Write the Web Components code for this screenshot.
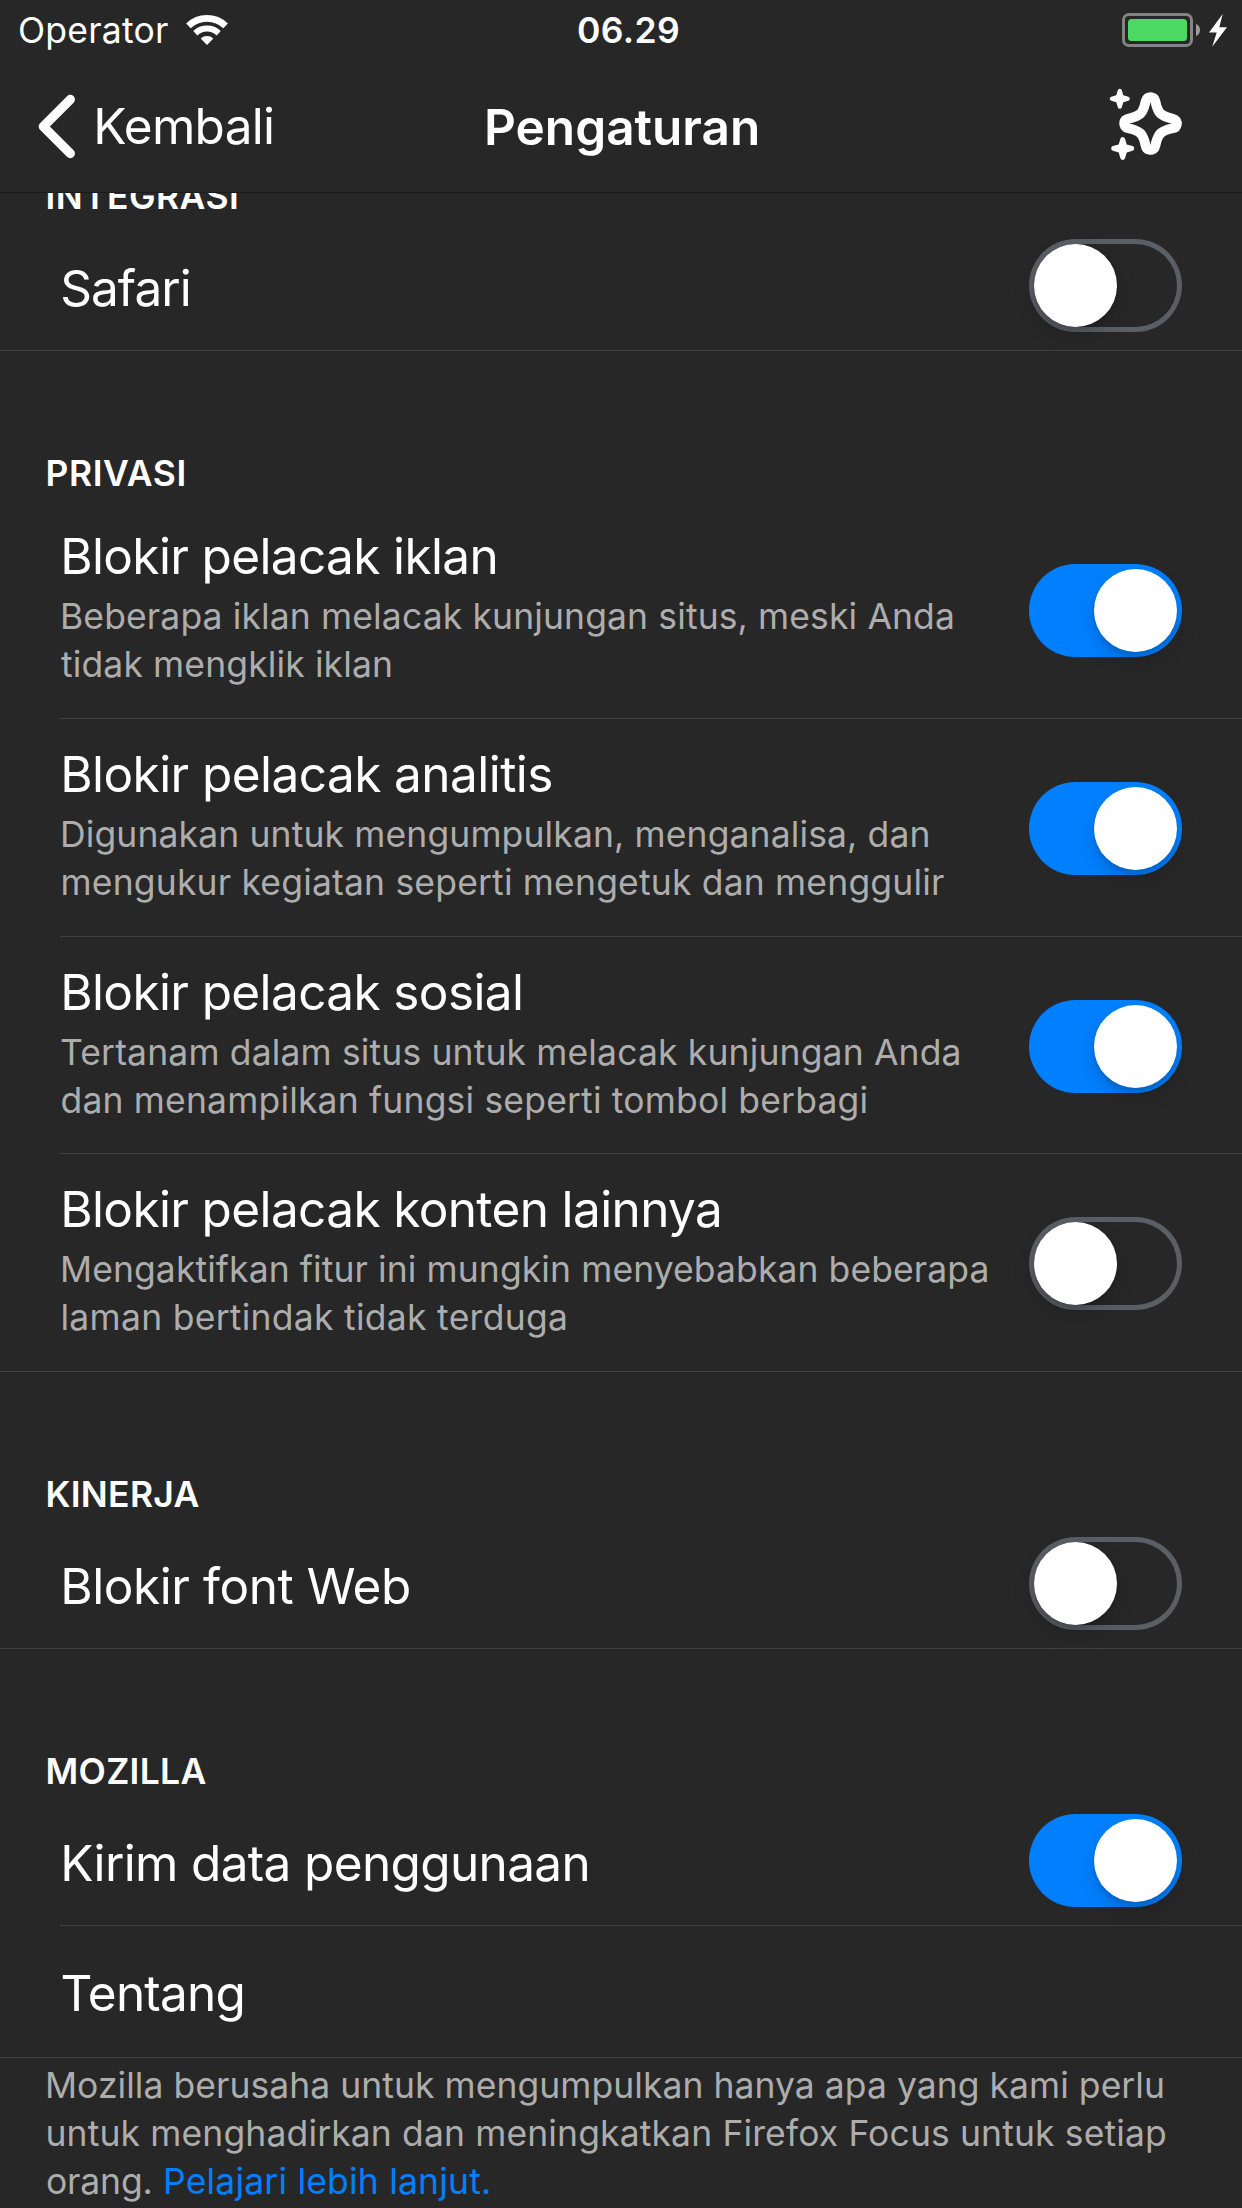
<!DOCTYPE html>
<html lang="id">
<head>
<meta charset="utf-8">
<title>Pengaturan</title>
<style>
  html, body { margin: 0; padding: 0; background: #272727; }
  body { width: 1242px; height: 2208px; overflow: hidden; color: #fff; font-family: Inter, "Liberation Sans", sans-serif; }
</style>
</head>
<body>
<settings-screen>
  <status-bar slot="status"></status-bar>
  <nav-bar slot="nav"></nav-bar>

  <settings-group first>
    <text-line slot="heading" kind="heading" x="47.5" w="189.5">INTEGRASI</text-line>
    <settings-row last>
      <text-line kind="title" x="2.2" w="127.5">Safari</text-line>
      <toggle-switch slot="control"></toggle-switch>
    </settings-row>
  </settings-group>

  <settings-group>
    <text-line slot="heading" kind="heading" x="47.5" w="137">PRIVASI</text-line>
    <settings-row tall>
      <text-line kind="title" x="4.2" w="431.3">Blokir pelacak iklan</text-line>
      <text-line slot="detail" kind="detail" x="3" w="890">Beberapa iklan melacak kunjungan situs, meski Anda</text-line>
      <text-line slot="detail" kind="detail" x="1" w="330">tidak mengklik iklan</text-line>
      <toggle-switch slot="control" on></toggle-switch>
    </settings-row>
    <settings-row tall>
      <text-line kind="title" x="4.2" w="487">Blokir pelacak analitis</text-line>
      <text-line slot="detail" kind="detail" x="3" w="865.5">Digunakan untuk mengumpulkan, menganalisa, dan</text-line>
      <text-line slot="detail" kind="detail" x="2.5" w="881.5">mengukur kegiatan seperti mengetuk dan menggulir</text-line>
      <toggle-switch slot="control" on></toggle-switch>
    </settings-row>
    <settings-row tall short>
      <text-line kind="title" x="4.2" w="456.8">Blokir pelacak sosial</text-line>
      <text-line slot="detail" kind="detail" x="1" w="898.5">Tertanam dalam situs untuk melacak kunjungan Anda</text-line>
      <text-line slot="detail" kind="detail" x="1.5" w="805">dan menampilkan fungsi seperti tombol berbagi</text-line>
      <toggle-switch slot="control" on></toggle-switch>
    </settings-row>
    <settings-row tall last>
      <text-line kind="title" x="4.2" w="654.8">Blokir pelacak konten lainnya</text-line>
      <text-line slot="detail" kind="detail" x="3" w="924.5">Mengaktifkan fitur ini mungkin menyebabkan beberapa</text-line>
      <text-line slot="detail" kind="detail" x="2.5" w="503.5">laman bertindak tidak terduga</text-line>
      <toggle-switch slot="control"></toggle-switch>
    </settings-row>
  </settings-group>

  <settings-group>
    <text-line slot="heading" kind="heading" x="47.5" w="151">KINERJA</text-line>
    <settings-row last>
      <text-line kind="title" x="4.2" w="344.8">Blokir font Web</text-line>
      <toggle-switch slot="control"></toggle-switch>
    </settings-row>
  </settings-group>

  <settings-group>
    <text-line slot="heading" kind="heading" x="47.5" w="158">MOZILLA</text-line>
    <settings-row>
      <text-line kind="title" x="4.2" w="523.3">Kirim data penggunaan</text-line>
      <toggle-switch slot="control" on></toggle-switch>
    </settings-row>
    <settings-row link last>
      <text-line kind="title" x="2.5" w="180">Tentang</text-line>
    </settings-row>
  </settings-group>

  <settings-note>
    <text-line kind="detail" x="48" w="1115">Mozilla berusaha untuk mengumpulkan hanya apa yang kami perlu</text-line>
    <text-line kind="detail" x="47.5" w="1117.5">untuk menghadirkan dan meningkatkan Firefox Focus untuk setiap</text-line>
    <div style="display:flex">
      <text-line kind="detail" x="47" w="103.5" style="width:150px">orang.</text-line>
      <text-line kind="detail" x="16" w="323" style="color:#0080ff">Pelajari lebih lanjut.</text-line>
    </div>
  </settings-note>
</settings-screen>

<script>
const define = (name, html, init) => customElements.define(name, class extends HTMLElement {
  constructor() {
    super();
    this.attachShadow({ mode: 'open' }).innerHTML = html;
  }
  connectedCallback() { if (init) init(this); }
});

/* One line of text, tracked so that its ink starts at x and spans w pixels. */
const pen = document.createElement('canvas').getContext('2d');
define('text-line', `<style>
  :host { display: block; white-space: nowrap; font-size: 49.5px; line-height: 60px; font-weight: 400; }
  :host([kind=heading]) { font-size: 35.5px; line-height: 48px; font-weight: 600; }
  :host([kind=detail]) { font-size: 35.5px; line-height: 48px; color: #adadad; }
  :host([kind=carrier]) { font-size: 35.5px; line-height: 62px; }
  :host([kind=clock]) { font-size: 35.5px; line-height: 62px; font-weight: 600; }
  :host([kind=navtitle]) { font-weight: 600; }
</style><slot></slot>`, el => {
  const text = el.textContent, cs = getComputedStyle(el);
  pen.font = `${cs.fontWeight} ${cs.fontSize} ${cs.fontFamily}`;
  const m = pen.measureText(text);
  const ink = m.actualBoundingBoxRight + m.actualBoundingBoxLeft;
  el.style.letterSpacing = ((el.getAttribute('w') - ink) / (text.length - 1)).toFixed(3) + 'px';
  el.style.textIndent = (+el.getAttribute('x') + m.actualBoundingBoxLeft).toFixed(2) + 'px';
});

define('status-bar', `<style>
  :host { display: grid; grid-template-columns: 186px 1fr 120px; height: 60px; }
  svg { display: block; }
  .left { display: flex; }
</style>
<text-line kind="carrier" x="20" w="148">Operator</text-line>
<div class="left">
  <svg width="42" height="60" viewBox="186 0 42 60" fill="none" stroke="#fff">
    <path d="M188.400 25.800A27 27 0 0 1 225.600 25.800" stroke-width="6.600"/>
    <path d="M195.300 33.200A17 17 0 0 1 218.700 33.200" stroke-width="6"/>
    <path d="M207 45l-6.300-6.600a9.200 9.200 0 0 1 12.600 0z" fill="#fff" stroke="none"/>
  </svg>
  <text-line kind="clock" x="350" w="100">06.29</text-line>
</div>
<svg width="120" height="60" viewBox="1122 0 120 60">
  <rect x="1123.500" y="14.500" width="68" height="31" rx="5.500" fill="none" stroke="#848484" stroke-width="3"/>
  <rect x="1128" y="19" width="59" height="22" rx="3.500" fill="#4cd964"/>
  <path d="M1196 23.800q4 2 4 6.200t-4 6.200z" fill="#9a9a9a"/>
  <path d="M1222.700 14L1209 32.500h7.700L1212.200 46.700 1227 27.300h-7.700z" fill="#fff"/>
</svg>`);

define('nav-bar', `<style>
  :host { display: grid; grid-template-columns: 84px 1fr 164px; height: 132px; border-bottom: 1px solid #1b1b1b; }
  svg { display: block; }
  .mid { display: flex; padding-top: 36px; }
  .mid text-line:first-child { width: 390px; }
  .mid text-line:last-child { padding-top: 1px; }
</style>
<svg width="84" height="132" viewBox="0 60 84 132"><path d="M70.300 99.500L43.300 126.500 70.300 153.500" fill="none" stroke="#fff" stroke-width="9.300" stroke-linecap="round" stroke-linejoin="round"/></svg>
<div class="mid">
  <text-line kind="back" x="13.200" w="175.800">Kembali</text-line>
  <text-line kind="navtitle" x="13" w="270">Pengaturan</text-line>
</div>
<svg width="164" height="132" viewBox="1078 60 164 132">
  <g transform="translate(1150.500 123.500)" stroke-linejoin="round">
    <path d="M0-21.500C1.500-14 4-9 6.500-6.500 9-4 14-1.500 21.500 0 14 1.500 9 4 6.500 6.500 4 9 1.500 14 0 21.500-1.500 14-4 9-6.500 6.500-9 4-14 1.500-21.500 0-14-1.500-9-4-6.500-6.500-4-9-1.500-14 0-21.500z" fill="#fff" stroke="#fff" stroke-width="19.600"/>
    <path d="M0-21.500C1.500-14 4-9 6.500-6.500 9-4 14-1.500 21.500 0 14 1.500 9 4 6.500 6.500 4 9 1.500 14 0 21.500-1.500 14-4 9-6.500 6.500-9 4-14 1.500-21.500 0-14-1.500-9-4-6.500-6.500-4-9-1.500-14 0-21.500z" fill="#272727"/>
  </g>
  <g fill="#fff">
    <path transform="translate(1119.800 98.800)" d="M-2-8.500Q-1.500-10 0-10T2-8.500L3.500-3.500 8.500-2Q10-1.500 10 0T8.500 2L3.500 3.500 2 8.500Q1.500 10 0 10T-2 8.500L-3.500 3.500-8.500 2Q-10 1.500-10 0T-8.500-2L-3.500-3.500z"/>
    <path transform="translate(1122.700 148.400) scale(1.150)" d="M-2-8.500Q-1.500-10 0-10T2-8.500L3.500-3.500 8.500-2Q10-1.500 10 0T8.500 2L3.500 3.500 2 8.500Q1.500 10 0 10T-2 8.500L-3.500 3.500-8.500 2Q-10 1.500-10 0T-8.500-2L-3.500-3.500z"/>
  </g>
</svg>`);

define('toggle-switch', `<style>
  :host { display: flex; box-sizing: border-box; width: 153px; height: 93px; padding: 5px; border-radius: 47px; box-shadow: inset 0 0 0 5px #5a5e65; flex: none; }
  :host([on]) { justify-content: flex-end; background: #0080ff; box-shadow: none; }
  i { display: block; width: 83px; height: 83px; border-radius: 50%; background: #fff; box-shadow: 0 9px 22px rgba(0,0,0,.15), 0 4px 4px rgba(0,0,0,.12); }
</style><i></i>`);

define('settings-row', `<style>
  :host { display: flex; box-sizing: border-box; height: 127px; margin-left: 60px; padding-right: 60px; align-items: flex-start; justify-content: space-between; border-bottom: 1px solid #414141; }
  :host([last]) { margin-left: 0; padding-left: 60px; }
  .text { padding-top: 34px; }
  .detail { padding-top: 7px; }
  .control { padding-top: 15px; }
  :host([tall]) { height: 218px; }
  :host([tall][short]) { height: 217px; }
  :host([tall]) .text { padding-top: 25px; }
  :host([tall]) .control { padding-top: 63px; }
  :host([link]) { height: 132px; }
  :host([link]) .text { padding-top: 37px; }
</style>
<div class="text"><slot></slot><div class="detail"><slot name="detail"></slot></div></div>
<div class="control"><slot name="control"></slot></div>`);

define('settings-group', `<style>
  :host { display: block; }
  header { padding: 99px 0 3px; }
  :host([first]) header { padding-top: 1px; }
</style><header><slot name="heading"></slot></header><slot></slot>`);

define('settings-note', `<style>:host { display: block; padding-top: 4px; }</style><slot></slot>`);

define('settings-screen', `<style>
  :host { display: flex; flex-direction: column; width: 1242px; height: 2208px; background: #272727; }
  main { flex: 1; min-height: 0; overflow: hidden; }
  .list { margin-top: -21px; }
</style>
<slot name="status"></slot><slot name="nav"></slot>
<main><div class="list"><slot></slot></div></main>`);
</script>
</body>
</html>
